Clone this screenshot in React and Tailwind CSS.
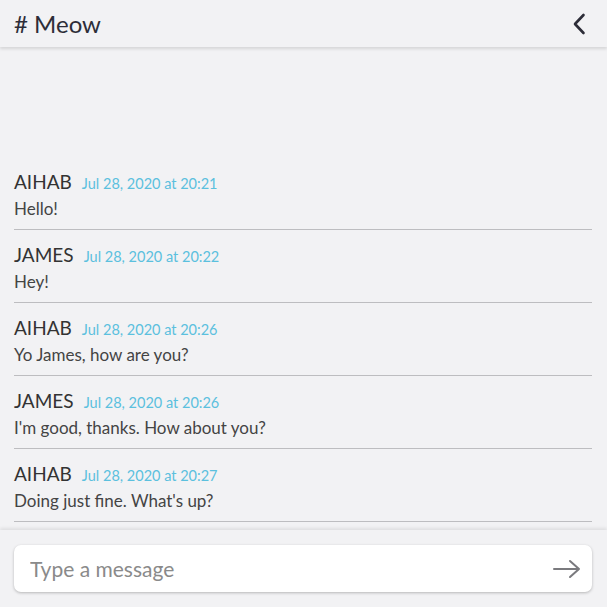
import React from "react";

const messages = [
  { user: "AIHAB", date: "Jul 28, 2020 at 20:21", text: "Hello!" },
  { user: "JAMES", date: "Jul 28, 2020 at 20:22", text: "Hey!" },
  { user: "AIHAB", date: "Jul 28, 2020 at 20:26", text: "Yo James, how are you?" },
  { user: "JAMES", date: "Jul 28, 2020 at 20:26", text: "I'm good, thanks. How about you?" },
  { user: "AIHAB", date: "Jul 28, 2020 at 20:27", text: "Doing just fine. What's up?" },
];

const App = () => {
  return (
    <div
      className="flex flex-col h-[607px] w-full bg-[#f2f2f4] text-[#333]"
      style={{ fontFamily: "Lato, 'Noto Sans', sans-serif" }}
    >
      {/* Header */}
      <div className="relative z-10 flex items-center justify-between h-[47px] pl-[14px] pr-[21px] shadow-[0_2px_3px_rgba(0,0,0,0.12)]">
        <h1 className="text-[24px] text-[#2d2d38]"># Meow</h1>
        <svg width="14" height="22" viewBox="0 0 14 22" fill="none">
          <path d="M11.5 2 L3 11 L11.5 20" stroke="#2d2d38" strokeWidth="2.6" strokeLinecap="round" strokeLinejoin="round" />
        </svg>
      </div>

      {/* Messages */}
      <div className="flex-1 flex flex-col justify-end pl-[14px] pr-[15px] pb-[8px]">
        {messages.map((msg, index) => (
          <div key={index} className="pt-[13px] pb-[8px] border-b border-[#bdbdc0]">
            <div className="flex items-baseline gap-[10px] h-[24px] leading-[24px]">
              <span className="text-[19px] text-[#333]">{msg.user}</span>
              <span className="text-[14.5px] text-[#5bc0de]">{msg.date}</span>
            </div>
            <div className="mt-[3px] h-[24px] leading-[24px] text-[17px] text-[#444]">{msg.text}</div>
          </div>
        ))}
      </div>

      {/* Input */}
      <div className="relative z-10 h-[77px] pt-[15px] pl-[14px] pr-[15px] shadow-[0_-2px_3px_rgba(0,0,0,0.08)]">
        <div className="flex items-center h-[47px] bg-white rounded-[7px] shadow-[0_1px_3px_rgba(0,0,0,0.25)] pl-[16px] pr-[11px]">
          <input
            className="flex-1 outline-none text-[21px] text-[#444] placeholder-[#8a8a8a] bg-transparent"
            placeholder="Type a message"
          />
          <svg width="28" height="20" viewBox="0 0 28 20" fill="none">
            <path d="M1 10 H26 M17 2 L26 10 L17 18" stroke="#7a7a7e" strokeWidth="2" strokeLinecap="round" strokeLinejoin="round" />
          </svg>
        </div>
      </div>
    </div>
  );
};

export default App;
